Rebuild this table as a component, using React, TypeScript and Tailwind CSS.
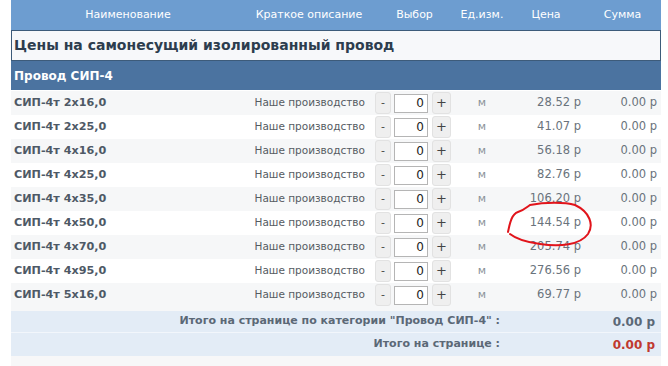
const rows = [
  { name: "СИП-4т 2x16,0", price: "28.52" },
  { name: "СИП-4т 2x25,0", price: "41.07" },
  { name: "СИП-4т 4x16,0", price: "56.18" },
  { name: "СИП-4т 4x25,0", price: "82.76" },
  { name: "СИП-4т 4x35,0", price: "106.20" },
  { name: "СИП-4т 4x50,0", price: "144.54" },
  { name: "СИП-4т 4x70,0", price: "205.74" },
  { name: "СИП-4т 4x95,0", price: "276.56" },
  { name: "СИП-4т 5x16,0", price: "69.77" },
];

const cols = "grid grid-cols-[234px_128px_83px_52px_76px_77px]";

function Row({ name, price, odd }: { name: string; price: string; odd: boolean }) {
  return (
    <div className={`${cols} h-[24px] items-center ${odd ? "bg-[#f6f7f8]" : "bg-white"}`}>
      <div className="pl-[3px] text-[11.2px] font-bold text-[#4e5966]">{name}</div>
      <div className="pr-[8px] text-right text-[10.5px] text-[#555b62]">Наше производство</div>
      <div className="flex items-center pl-[2px]">
        <button className="h-[22px] w-[16px] rounded-[3px] border border-[#e2e2e2] bg-[#efefef] text-[11px] text-[#444]">
          -
        </button>
        <input
          readOnly
          value="0"
          className="ml-[3px] h-[19px] w-[34px] border border-[#b5b5b5] bg-white pr-[3px] text-right text-[12px] text-[#222] outline-none"
        />
        <button className="ml-[4px] h-[22px] w-[19px] rounded-[3px] border border-[#e2e2e2] bg-[#efefef] text-[13px] text-[#444]">
          +
        </button>
      </div>
      <div className="text-center text-[11px] text-[#8a9199]">м</div>
      <div className="pr-[3px] text-right text-[11.5px] text-[#6a737c]">{price} р</div>
      <div className="pr-[4px] text-right text-[11.5px] text-[#6a737c]">0.00 р</div>
    </div>
  );
}

export default function App() {
  return (
    <div className="relative h-[366px] w-[668px] overflow-hidden bg-white font-['DejaVu_Sans',sans-serif]">
      <div className="ml-[11px] w-[650px]">
        <div className={`${cols} h-[30px] items-center bg-[#6d9dd0] text-center text-[11px] text-white`}>
          <div>Наименование</div>
          <div>Краткое описание</div>
          <div>Выбор</div>
          <div>Ед.изм.</div>
          <div>Цена</div>
          <div>Сумма</div>
        </div>
        <div className="flex h-[31px] items-center border border-[#3d5b7a] bg-[#f7f8fa] pl-[2px] text-[14px] font-bold text-[#2d3d4e]">
          Цены на самонесущий изолированный провод
        </div>
        <div className="flex h-[29px] items-center bg-[#4b73a0] pl-[3px] text-[12px] font-bold text-white">
          Провод СИП-4
        </div>
        <div className="pt-[1px]">
          {rows.map((r, i) => (
            <Row key={r.name} name={r.name} price={r.price} odd={i % 2 === 0} />
          ))}
        </div>
        <div className="h-[4px] bg-[#f6f7f8]" />
        <div className="flex h-[22px] items-center border-b border-[#f2f6fb] bg-[#e3ecf6] text-[11px] font-bold text-[#5b6876]">
          <div className="w-[489px] text-right">Итого на странице по категории "Провод СИП-4" :</div>
          <div className="flex-1 pr-[6px] text-right text-[12px]">0.00 р</div>
        </div>
        <div className="flex h-[23px] items-center bg-[#e3ecf6] text-[11px] font-bold text-[#5b6876]">
          <div className="w-[489px] text-right">Итого на странице :</div>
          <div className="flex-1 pr-[6px] text-right text-[12px] text-[#c0392f]">0.00 р</div>
        </div>
        <div className="h-[10px] bg-[#f7f7f8]" />
      </div>
      <svg className="pointer-events-none absolute left-0 top-0" width="668" height="366">
        <path
          d="M508 232 C 510 222, 512 214, 518 212 C 524 210, 526 208, 530 205 C 545 202, 565 202, 575 205 C 590 212, 594 225, 588 234 C 580 245, 560 247, 540 244 C 525 242, 515 238, 510 234"
          fill="none"
          stroke="#e1141b"
          strokeWidth="2"
          strokeLinecap="round"
        />
      </svg>
    </div>
  );
}
